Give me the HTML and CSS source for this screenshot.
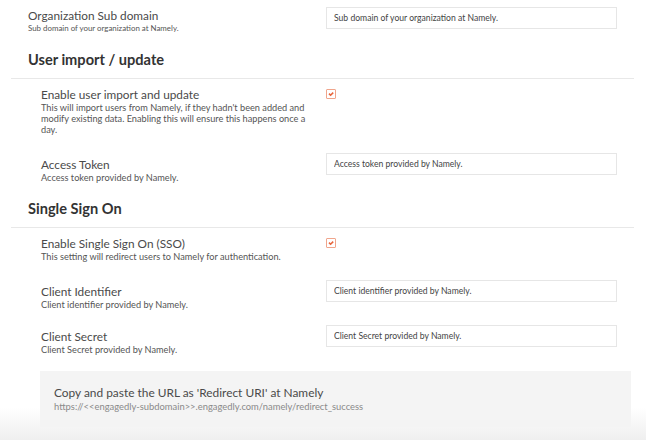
FILE: index.html
```html
<!DOCTYPE html>
<html>
<head>
<meta name="viewport" content="width=device-width, initial-scale=1">
<link rel="stylesheet" href="styles.css">
</head>
<body>
<div class="settings">

  <div class="field field-top">
    <div class="field-info">
      <div class="field-label">Organization Sub domain</div>
      <div class="field-desc field-desc-small">Sub domain of your organization at Namely.</div>
    </div>
    <div class="field-control">
      <input class="text-input" type="text" placeholder="Sub domain of your organization at Namely.">
    </div>
  </div>

  <h2 class="section-title">User import / update</h2>
  <div class="section">
    <div class="field field-check">
      <div class="field-info">
        <div class="field-label">Enable user import and update</div>
        <div class="field-desc">This will import users from Namely, if they hadn't been added and modify existing data. Enabling this will ensure this happens once a day.</div>
      </div>
      <div class="field-control">
        <span class="checkbox"><svg viewBox="0 0 10 10" width="10" height="10"><path d="M3 4.6 L4.6 6.2 L7.2 3.6" fill="none" stroke="#e8663d" stroke-width="1.6"/></svg></span>
      </div>
    </div>
    <div class="field">
      <div class="field-info">
        <div class="field-label">Access Token</div>
        <div class="field-desc">Access token provided by Namely.</div>
      </div>
      <div class="field-control">
        <input class="text-input" type="text" placeholder="Access token provided by Namely.">
      </div>
    </div>
  </div>

  <h2 class="section-title">Single Sign On</h2>
  <div class="section">
    <div class="field field-check">
      <div class="field-info">
        <div class="field-label">Enable Single Sign On (SSO)</div>
        <div class="field-desc">This setting will redirect users to Namely for authentication.</div>
      </div>
      <div class="field-control">
        <span class="checkbox"><svg viewBox="0 0 10 10" width="10" height="10"><path d="M3 4.6 L4.6 6.2 L7.2 3.6" fill="none" stroke="#e8663d" stroke-width="1.6"/></svg></span>
      </div>
    </div>
    <div class="field">
      <div class="field-info">
        <div class="field-label">Client Identifier</div>
        <div class="field-desc">Client identifier provided by Namely.</div>
      </div>
      <div class="field-control">
        <input class="text-input" type="text" placeholder="Client identifier provided by Namely.">
      </div>
    </div>
    <div class="field">
      <div class="field-info">
        <div class="field-label">Client Secret</div>
        <div class="field-desc">Client Secret provided by Namely.</div>
      </div>
      <div class="field-control">
        <input class="text-input" type="text" placeholder="Client Secret provided by Namely.">
      </div>
    </div>

    <div class="redirect-box">
      <div class="redirect-title">Copy and paste the URL as 'Redirect URI' at Namely</div>
      <div class="redirect-url">https://&lt;&lt;engagedly-subdomain&gt;&gt;.engagedly.com/namely/redirect_success</div>
    </div>
  </div>

</div>
</body>
</html>
```

FILE: styles.css
```css
html, body {
  margin: 0;
  height: 100%;
}

body {
  font-family: Lato, "Open Sans", sans-serif;
  color: #555;
  background: linear-gradient(to bottom, #fff 408px, #efefef 440px);
  overflow: hidden;
}

.settings {
  padding-top: 7px;
}

/* one setting row: text on the left, control on the right */
.field {
  display: flex;
  padding-left: 30px;
  margin-bottom: 15px;
}

.field-info {
  width: 266px;
  margin-right: 19px;
  padding-top: 5px;
}

.field-control {
  width: 291px;
}

.field-top {
  padding-left: 28px;
  margin-bottom: 18px;
}

.field-top .field-info {
  width: 298px;
  margin-right: 0;
  padding-top: 2px;
}

.field-check {
  margin-bottom: 18px;
}

.field-check .field-info {
  padding-top: 0;
}

.field-check .field-control {
  padding-top: 1px;
}

.field-label {
  font-size: 11.8px;
  line-height: 14px;
  color: #4a4a4a;
}

.field-desc {
  font-size: 9.2px;
  line-height: 11px;
  color: #555;
}

.field-desc-small {
  font-size: 7.9px;
  line-height: 10px;
}

.text-input {
  display: block;
  box-sizing: border-box;
  width: 291px;
  height: 22px;
  border: 1px solid #e6e6e6;
  padding: 0 7px;
  font-family: Lato, sans-serif;
  font-size: 8.6px;
  background: #fff;
  outline: none;
}

.text-input::placeholder {
  color: #444;
}

.section-title {
  margin: 0 0 0 28px;
  font-size: 14.6px;
  line-height: 18px;
  font-weight: bold;
  color: #333;
}

.section {
  margin-left: 11px;
  width: 623px;
  border-top: 1px solid #e8e8e8;
  margin-top: 9px;
  padding-top: 9px;
  margin-bottom: 17px;
}

.checkbox {
  display: block;
  box-sizing: border-box;
  width: 10px;
  height: 10px;
  border: 1px solid #f0a58c;
  border-radius: 1px;
  background: #fff;
  line-height: 0;
}

.checkbox svg {
  margin: -1px 0 0 -1px;
}

.redirect-box {
  margin-top: 16px;
  margin-left: 29px;
  width: 591px;
  height: 56px;
  box-sizing: border-box;
  background: #f4f4f4;
  padding: 13px 14px;
}

.redirect-title {
  font-size: 11.9px;
  line-height: 17px;
  color: #4a4a4a;
}

.redirect-url {
  font-size: 9.4px;
  line-height: 12px;
  color: #8a8a8a;
}
```
